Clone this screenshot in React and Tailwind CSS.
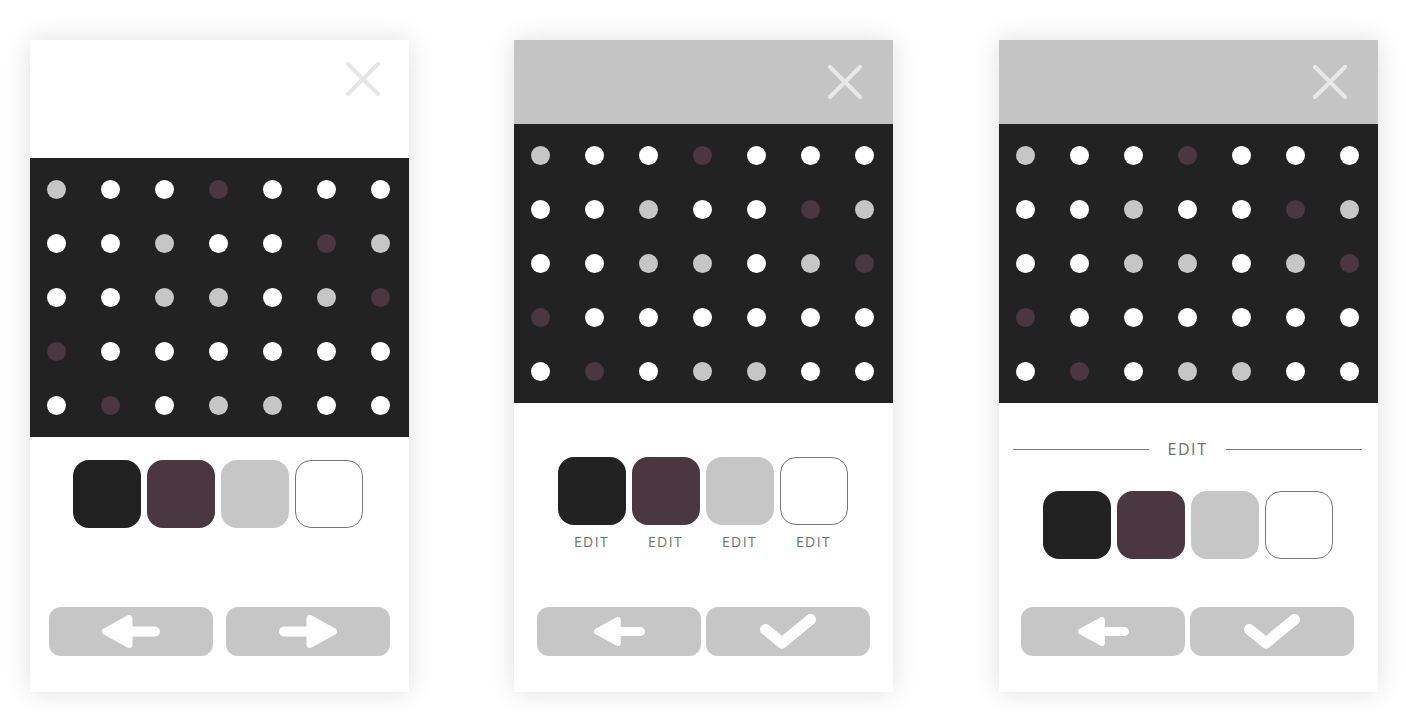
const DARK = "#222222";

// dot pattern shared by all three screens: w = white, g = gray, p = plum
const pattern = [
  "gwwpwww",
  "wwgwwpg",
  "wwggwgp",
  "pwwwwww",
  "wpwggww",
];

const dotClass = {
  w: "bg-white",
  g: "bg-[#c6c6c6]",
  p: "bg-[#4a3740]",
};

function CloseIcon({ color }) {
  return (
    <svg width="34" height="34" viewBox="0 0 34 34">
      <path d="M2 2 L32 32 M32 2 L2 32" stroke={color} strokeWidth="4" strokeLinecap="round" fill="none" />
    </svg>
  );
}

function DotGrid({ shift = "" }) {
  return (
    <div className={`h-[279px] bg-[${DARK}] flex items-center justify-center ${shift}`}>
      <div className="grid grid-cols-[repeat(7,54px)] grid-rows-[repeat(5,54px)]">
        {pattern.flatMap((row, r) =>
          row.split("").map((c, i) => (
            <div key={`${r}-${i}`} className="flex items-center justify-center">
              <div className={`w-[19px] h-[19px] rounded-full ${dotClass[c]}`} />
            </div>
          ))
        )}
      </div>
    </div>
  );
}

const swatches = [
  "bg-[#222222]",
  "bg-[#4a3740]",
  "bg-[#c6c6c6]",
  "bg-white border border-[#777777]",
];

function Swatches({ labels, shift = "" }) {
  return (
    <div className={`flex justify-center gap-[6px] ${shift}`}>
      {swatches.map((s, i) => (
        <div key={i} className="flex flex-col items-center w-[68px]">
          <div className={`w-[68px] h-[68px] rounded-[16px] ${s}`} />
          {labels && (
            <span className="mt-[9px] text-[14px] leading-[16px] tracking-[0.1em] text-[#707070]">
              EDIT
            </span>
          )}
        </div>
      ))}
    </div>
  );
}

function Arrow({ dir, w, h }) {
  return (
    <svg width={w} height={h} viewBox="0 0 58 33" className={dir === "right" ? "-scale-x-100" : ""}>
      <polygon points="3.5,16.5 27,3.5 27,29.5" fill="white" stroke="white" strokeWidth="7" strokeLinejoin="round" />
      <line x1="27" y1="16.5" x2="53" y2="16.5" stroke="white" strokeWidth="10" strokeLinecap="round" />
    </svg>
  );
}

function Check() {
  return (
    <svg width="56" height="35" viewBox="0 0 56 35">
      <polyline points="5.5,15.5 22,29 50.5,5.5" fill="none" stroke="white" strokeWidth="11" strokeLinecap="round" strokeLinejoin="round" />
    </svg>
  );
}

function Btn({ children }) {
  return (
    <button className="h-[49px] w-[164px] rounded-[12px] bg-[#c6c6c6] flex items-center justify-center">
      {children}
    </button>
  );
}

function Panel({ children, className = "" }) {
  return (
    <div className={`w-[379px] h-[652px] bg-white flex flex-col shadow-[0_0_24px_rgba(0,0,0,0.13)] ${className}`}>
      {children}
    </div>
  );
}

export default function App() {
  return (
    <div className="min-h-screen bg-white flex gap-[105px] pl-[30px] pt-[40px] font-['Open_Sans',sans-serif]">
      {/* 1: pick palette */}
      <Panel>
        <div className="h-[118px] flex justify-end pt-[22px] pr-[29px]">
          <CloseIcon color="#e6e6e6" />
        </div>
        <DotGrid shift="pr-[3px]" />
        <div className="mt-[23px]">
          <Swatches shift="pr-[3px]" />
        </div>
        <div className="flex-1" />
        <div className="flex gap-[13px] pl-[19px] mb-[36px]">
          <Btn><Arrow dir="left" w={58} h={33} /></Btn>
          <Btn><Arrow dir="right" w={58} h={33} /></Btn>
        </div>
      </Panel>

      {/* 2: edit each colour */}
      <Panel>
        <div className="h-[84px] bg-[#c4c4c4] flex items-center justify-end pr-[31px]">
          <CloseIcon color="#e8e8e8" />
        </div>
        <DotGrid shift="pr-[2px]" />
        <div className="mt-[54px]">
          <Swatches labels shift="pr-[2px]" />
        </div>
        <div className="flex-1" />
        <div className="flex gap-[5px] pl-[23px] mb-[36px]">
          <Btn><Arrow dir="left" w={51} h={29} /></Btn>
          <Btn><Check /></Btn>
        </div>
      </Panel>

      {/* 3: edit all */}
      <Panel className="ml-px">
        <div className="h-[84px] bg-[#c4c4c4] flex items-center justify-end pr-[31px]">
          <CloseIcon color="#e8e8e8" />
        </div>
        <DotGrid shift="pr-[2px]" />
        <div className="mt-[36px] h-[20px] flex items-center gap-[18px] pl-[14px] pr-[16px]">
          <div className="flex-1 h-px bg-[#777777]" />
          <span className="text-[16px] leading-[20px] tracking-[0.1em] text-[#707070]">EDIT</span>
          <div className="flex-1 h-px bg-[#777777]" />
        </div>
        <div className="mt-[32px]">
          <Swatches shift="pr-[2px]" />
        </div>
        <div className="flex-1" />
        <div className="flex gap-[5px] pl-[22px] mb-[36px]">
          <Btn><Arrow dir="left" w={51} h={29} /></Btn>
          <Btn><Check /></Btn>
        </div>
      </Panel>
    </div>
  );
}
